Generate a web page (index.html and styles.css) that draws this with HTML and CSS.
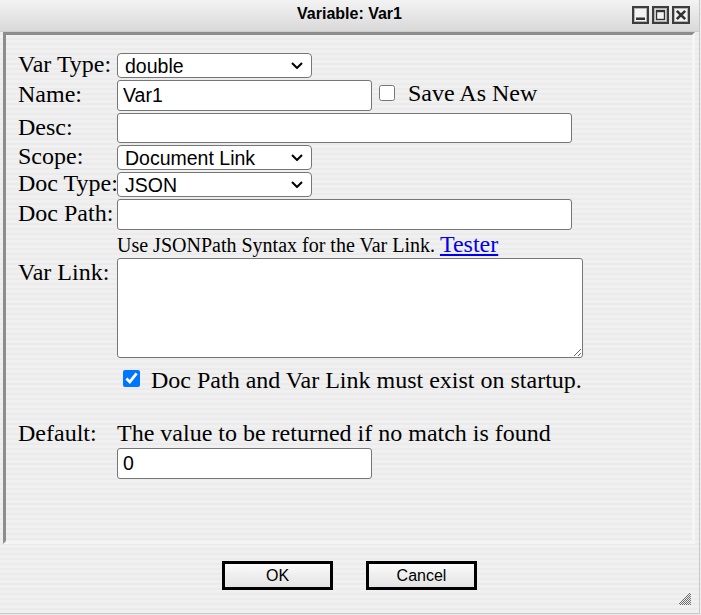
FILE: index.html
```html
<!DOCTYPE html>
<html>
<head>
<meta charset="utf-8">
<title>Variable: Var1</title>
<link rel="stylesheet" href="styles.css">
</head>
<body>
<div class="window">
  <div class="titlebar">
    <span></span>
    <span class="title">Variable: Var1</span>
    <div class="wbtns">
      <svg class="wbtn" width="17" height="18" viewBox="0 0 17 18"><rect x="1" y="1" width="15" height="16" fill="#f3f3f3" stroke="#3d3d3d" stroke-width="2"/><rect x="2.5" y="2.5" width="12" height="13" fill="none" stroke="#b4b4b4" stroke-width="1"/><rect x="4" y="11.5" width="9" height="2.5" fill="#333"/></svg>
      <svg class="wbtn" width="17" height="18" viewBox="0 0 17 18"><rect x="1" y="1" width="15" height="16" fill="#f3f3f3" stroke="#3d3d3d" stroke-width="2"/><rect x="2.5" y="2.5" width="12" height="13" fill="none" stroke="#b4b4b4" stroke-width="1"/><rect x="4.5" y="4.5" width="8" height="9" fill="none" stroke="#333" stroke-width="1.4"/><rect x="4" y="4" width="9" height="2.2" fill="#333"/></svg>
      <svg class="wbtn" width="18" height="18" viewBox="0 0 18 18"><rect x="1" y="1" width="16" height="16" fill="#f3f3f3" stroke="#3d3d3d" stroke-width="2"/><rect x="2.5" y="2.5" width="13" height="13" fill="none" stroke="#b4b4b4" stroke-width="1"/><path d="M4.8 4.8 L13.2 13.2 M13.2 4.8 L4.8 13.2" stroke="#333" stroke-width="2.6"/></svg>
    </div>
  </div>
  <div class="frame">
    <div class="form">
      <label class="lbl">Var Type:</label>
      <div class="selwrap">
        <select class="sel"><option>double</option></select>
        <svg class="chev" width="12" height="7" viewBox="0 0 12 7"><polyline points="1,1 6,6 11,1" fill="none" stroke="#000" stroke-width="2"/></svg>
      </div>

      <label class="lbl">Name:</label>
      <div class="inline">
        <input class="txt short" type="text" value="Var1">
        <input class="chk" type="checkbox">
        <span class="chklbl">Save As New</span>
      </div>

      <label class="lbl">Desc:</label>
      <input class="txt long desc" type="text" value="">

      <label class="lbl">Scope:</label>
      <div class="selwrap">
        <select class="sel"><option>Document Link</option></select>
        <svg class="chev" width="12" height="7" viewBox="0 0 12 7"><polyline points="1,1 6,6 11,1" fill="none" stroke="#000" stroke-width="2"/></svg>
      </div>

      <label class="lbl">Doc Type:</label>
      <div class="selwrap">
        <select class="sel"><option>JSON</option></select>
        <svg class="chev" width="12" height="7" viewBox="0 0 12 7"><polyline points="1,1 6,6 11,1" fill="none" stroke="#000" stroke-width="2"/></svg>
      </div>

      <label class="lbl">Doc Path:</label>
      <input class="txt long" type="text" value="">

      <span></span>
      <div class="hint">Use JSONPath Syntax for the Var Link. <a href="#" class="link">Tester</a></div>

      <label class="lbl top">Var Link:</label>
      <textarea class="area"></textarea>

      <span></span>
      <div class="inline chkrow">
        <input class="chk checked" type="checkbox" checked>
        <span class="chklbl2">Doc Path and Var Link must exist on startup.</span>
      </div>

      <label class="lbl defl">Default:</label>
      <div class="deftext defl">The value to be returned if no match is found</div>

      <span></span>
      <input class="txt short" type="text" value="0">
    </div>
  </div>
  <div class="actions">
    <button class="btn">OK</button>
    <button class="btn">Cancel</button>
  </div>
  <svg class="grip" width="12" height="12" viewBox="0 0 12 12">
    <g fill="#6e6e6e">
      <rect x="10" y="0" width="1" height="1"/>
      <rect x="9" y="1" width="1" height="1"/><rect x="11" y="1" width="1" height="1"/>
      <rect x="8" y="2" width="1" height="1"/><rect x="10" y="2" width="1" height="1"/>
      <rect x="7" y="3" width="1" height="1"/><rect x="9" y="3" width="1" height="1"/><rect x="11" y="3" width="1" height="1"/>
      <rect x="6" y="4" width="1" height="1"/><rect x="8" y="4" width="1" height="1"/><rect x="10" y="4" width="1" height="1"/>
      <rect x="5" y="5" width="1" height="1"/><rect x="7" y="5" width="1" height="1"/><rect x="9" y="5" width="1" height="1"/><rect x="11" y="5" width="1" height="1"/>
      <rect x="4" y="6" width="1" height="1"/><rect x="6" y="6" width="1" height="1"/><rect x="8" y="6" width="1" height="1"/><rect x="10" y="6" width="1" height="1"/>
      <rect x="3" y="7" width="1" height="1"/><rect x="5" y="7" width="1" height="1"/><rect x="7" y="7" width="1" height="1"/><rect x="9" y="7" width="1" height="1"/><rect x="11" y="7" width="1" height="1"/>
      <rect x="2" y="8" width="1" height="1"/><rect x="4" y="8" width="1" height="1"/><rect x="6" y="8" width="1" height="1"/><rect x="8" y="8" width="1" height="1"/><rect x="10" y="8" width="1" height="1"/>
      <rect x="1" y="9" width="1" height="1"/><rect x="3" y="9" width="1" height="1"/><rect x="5" y="9" width="1" height="1"/><rect x="7" y="9" width="1" height="1"/><rect x="9" y="9" width="1" height="1"/><rect x="11" y="9" width="1" height="1"/>
      <rect x="0" y="10" width="1" height="1"/><rect x="2" y="10" width="1" height="1"/><rect x="4" y="10" width="1" height="1"/><rect x="6" y="10" width="1" height="1"/><rect x="8" y="10" width="1" height="1"/><rect x="10" y="10" width="1" height="1"/>
      <rect x="1" y="11" width="1" height="1"/><rect x="3" y="11" width="1" height="1"/><rect x="5" y="11" width="1" height="1"/><rect x="7" y="11" width="1" height="1"/><rect x="9" y="11" width="1" height="1"/><rect x="11" y="11" width="1" height="1"/>
    </g>
  </svg>
</div>
</body>
</html>
```

FILE: styles.css
```css
* { box-sizing: border-box; }
html, body { margin: 0; height: 100%; }
body {
  background: repeating-linear-gradient(180deg, #f0f0f0 0 3px, #ebebeb 3px 5px);
  font-family: "Liberation Serif", "Times New Roman", serif;
  color: #000;
  overflow: hidden;
}
.window {
  position: relative;
  width: 700px;
  height: 614px;
  border-right: 1px solid #c8c8c8;
  border-bottom: 1px solid #c8c8c8;
  display: flex;
  flex-direction: column;
}
.titlebar {
  height: 32px;
  background: linear-gradient(#f3f3f3, #d9d9d9);
  border-bottom: 1px solid #cdcdcd;
  display: grid;
  grid-template-columns: 1fr auto 1fr;
  align-items: start;
}
.title {
  font: bold 16px "Liberation Sans", Arial, sans-serif;
  padding-top: 5px;
}
.wbtns {
  justify-self: end;
  display: flex;
  gap: 3px;
  padding-top: 6px;
  padding-right: 9px;
}
.wbtn { display: block; }
.frame {
  margin: 0 4px 0 3px;
  height: 512px;
  border: 3px solid;
  border-color: #8d8d8d #f5f5f5 #f5f5f5 #8d8d8d;
  padding: 18px 0 0 12px;
}
.form {
  display: grid;
  grid-template-columns: 99px auto;
  row-gap: 2px;
  align-items: center;
  justify-items: start;
}
.lbl {
  font-size: 24px;
  line-height: 22px;
  margin-bottom: 3px;
  white-space: nowrap;
}
.lbl.top { align-self: start; margin-top: 3px; }
.selwrap {
  position: relative;
  width: 195px;
  height: 25px;
}
.sel {
  display: block;
  width: 195px;
  height: 25px;
  font: 19.5px "Liberation Sans", Arial, sans-serif;
  color: #000;
  background: #fff;
  border: 1px solid #767676;
  border-radius: 4px;
  padding: 0 24px 0 7px;
  appearance: none;
  -webkit-appearance: none;
}
.chev {
  position: absolute;
  right: 9px;
  top: 9px;
  pointer-events: none;
}
.txt {
  height: 31px;
  font: 19.5px "Liberation Sans", Arial, sans-serif;
  color: #000;
  background: #fff;
  border: 1px solid #767676;
  border-radius: 3px;
  padding: 0 5px;
}
.txt.short { width: 255px; }
.txt.long { width: 455px; }
.txt.desc { height: 30px; }
.inline { display: flex; align-items: flex-start; }
.chk {
  width: 16px;
  height: 16px;
  margin: 5px 0 0 7px;
}
.chklbl {
  font-size: 24px;
  line-height: 27px;
  margin-left: 13px;
  white-space: nowrap;
}
.hint {
  height: 24px;
  font-size: 20px;
  line-height: 24px;
  white-space: nowrap;
}
.link {
  font-size: 24px;
  color: #0000ee;
  text-decoration: underline;
}
.area {
  display: block;
  width: 466px;
  height: 100px;
  border: 1px solid #767676;
  border-radius: 3px;
  background: #fff;
  font: 19.5px "Liberation Sans", Arial, sans-serif;
}
.chkrow { height: 37px; align-items: center; }
.chk.checked {
  width: 17px;
  height: 17px;
  margin: 0 0 0 6px;
}
.chklbl2 {
  font-size: 24px;
  line-height: 27px;
  margin-left: 11px;
  padding-top: 3px;
  white-space: nowrap;
}
.defl { margin-top: 22px; }
.lbl.defl { line-height: 25px; margin-bottom: 0; }
.deftext {
  font-size: 24px;
  line-height: 25px;
  white-space: nowrap;
}
.actions {
  display: flex;
  justify-content: center;
  gap: 33px;
  margin-top: 17px;
}
.btn {
  width: 111px;
  height: 29px;
  border: 3px solid #000;
  border-radius: 0;
  background: linear-gradient(#fbfbfb, #ececec 60%, #e4e4e4);
  font: 16px "Liberation Sans", Arial, sans-serif;
  color: #000;
  padding: 0;
}
.grip {
  position: absolute;
  right: 8px;
  bottom: 8px;
}
```
